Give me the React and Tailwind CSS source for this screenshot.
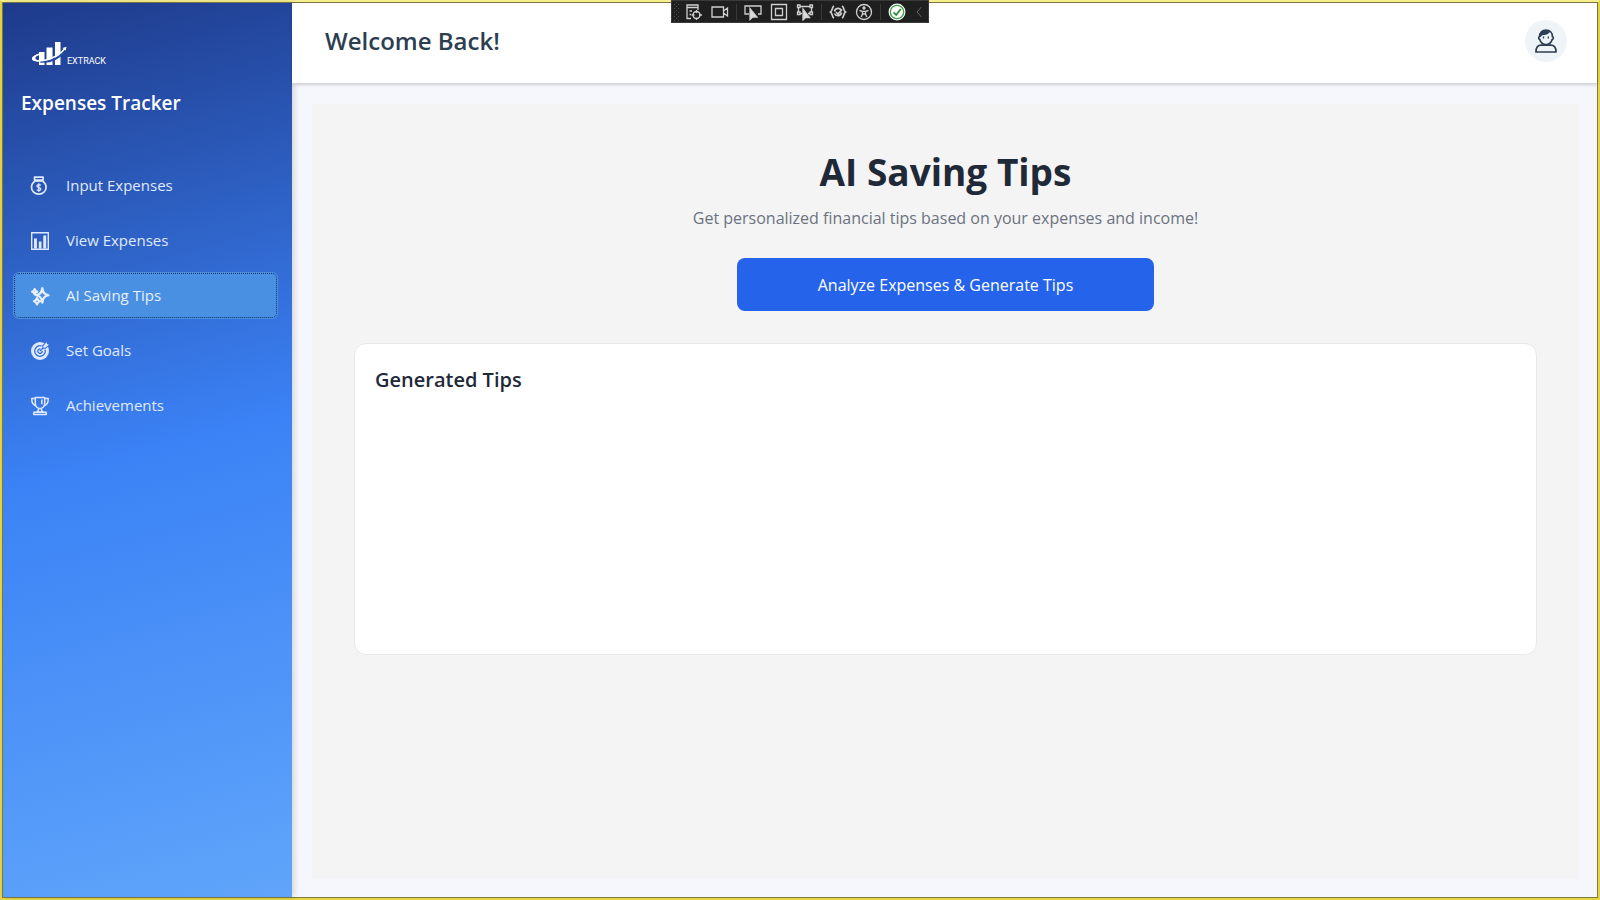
import { useState } from "react";

const iconProps = {
  width: 20,
  height: 20,
  viewBox: "0 0 20 20",
  fill: "none",
  stroke: "currentColor",
  strokeWidth: 1.7,
  strokeLinejoin: "round",
  "aria-hidden": true,
};

const MoneyIcon = () => (
  <svg {...iconProps}>
    <path d="M4.5 1.200h8.600v2.900H4.500zM5 5.200C2.800 6.600 1.500 8.700 1.500 11.200c0 4 3.200 7 7.300 7s7.300-3 7.300-7c0-2.500-1.300-4.600-3.500-6" />
    <path d="M5 5h7.600" />
    <path strokeWidth="1.300" d="M10.800 9.400C10.300 8.800 9.600 8.600 8.800 8.600c-1.100 0-1.900.6-1.900 1.500 0 2 3.900 1 3.900 3 0 .9-.8 1.500-2 1.500-.9 0-1.600-.3-2.100-.9M8.800 7.200v8.800" />
  </svg>
);

const ChartIcon = () => (
  <svg {...iconProps} strokeLinejoin="miter">
    <path d="M1.700 1.700h16.600v16.600H1.700z" strokeWidth="1.400" />
    <path d="M4 7.500h2.900v10H4zM8.800 10.500h2.700v7H8.800zM13.300 4.500h2.900v13h-2.900z" fill="currentColor" stroke="none" />
  </svg>
);

const SparkleIcon = () => (
  <svg {...iconProps}>
    <path d="M12.300 2c.6 4.700 1.800 6.300 6.200 7.300-4.400 1-5.600 2.700-6.200 7.400-.6-4.700-1.800-6.400-6.200-7.400 4.400-1 5.600-2.600 6.200-7.300z" strokeWidth="2.200" />
    <path d="M4.700 3c.4 1.700 1 2.300 2.700 2.700-1.700.4-2.300 1-2.700 2.700C4.300 6.700 3.700 6.100 2 5.700c1.700-.4 2.300-1 2.700-2.700zM7 12c.5 2 1.100 2.700 3.100 3.200-2 .5-2.600 1.200-3.100 3.200-.5-2-1.100-2.700-3.100-3.200 2-.5 2.600-1.200 3.100-3.200z" strokeWidth="2.200" />
  </svg>
);

const GoalIcon = () => (
  <svg {...iconProps} stroke="none">
    <circle cx="10" cy="10" r="9" fill="currentColor" />
    <path stroke="#3570e0" strokeWidth="1.300" d="M11.500 4.900a5.300 5.300 0 1 0 3.600 3.600M10.300 7.900a2.200 2.200 0 1 0 1.900 1.900M10 10l3-3M13 7l-.2-2.300L16 1.500M13 7l2.300.2L18.500 4" />
    <path fill="currentColor" d="M13.600 6.400V4.900L16.400 1l.6 2 2 .7-3.700 2.800z" />
  </svg>
);

const TrophyIcon = () => (
  <svg {...iconProps} strokeWidth="1.500">
    <path d="M5.300 1.500h9.400v5.800c0 3-2 5.200-4.700 5.200S5.300 10.300 5.300 7.300z" />
    <path d="M5.300 2.600H1.700c0 4 1.300 6.500 4.300 7.200M14.700 2.600h3.600c0 4-1.300 6.500-4.300 7.200" />
    <path d="M8.800 12.500c0 1.700-.6 2.600-1.800 3.400h6c-1.200-.8-1.800-1.700-1.800-3.400M3.700 16.200h12.600v2.300H3.700zM11.800 3.500v4.800" />
  </svg>
);

const UserIcon = () => (
  <svg width="22" height="24" viewBox="0 0 22 24" fill="none" stroke="currentColor" strokeWidth="1.700" strokeLinejoin="round" aria-hidden="true">
    <path d="M4.600 7.500C4.600 3.500 7.300 1 11 1s6.400 2.500 6.400 6.500c1.300.4 1.300 2.600-.2 2.900-.9 3-3.300 5.100-6.200 5.100s-5.300-2.100-6.200-5.100C3.300 10.100 3.300 7.900 4.600 7.500z" />
    <path d="M4.500 7.500C4.500 3.500 7.300 1 11 1c2 0 3.500.7 4.500 1.800C14 3.500 13.500 5 11.500 5.600 9 6.500 6.800 5.500 6 8z" fill="currentColor" stroke="none" />
    <path d="M8.500 7.500v2M13.300 7.500v2" strokeWidth="1.300" />
    <path d="M1 23c0-4.500 2.200-6.800 5.200-6.800h9.600c3 0 5.200 2.300 5.200 6.800z" />
  </svg>
);

const LogoMark = () => (
  <svg width="36" height="26" viewBox="0 0 36 26" fill="none" aria-hidden="true">
    <path fill="#fff" d="M8 11h5.500v13H8zM15.500 6.500h6V24h-6zM24 1h5.500v23H24z" />
    <path stroke="#244ba6" strokeWidth="2" d="M9 20.500c9 1 18-2.500 24-9.500" />
    <path stroke="#fff" strokeWidth="1.500" d="M12 12.500C5 13.500 1 16.500 1.800 18.300 3.500 22 24 20 34 7.500" />
    <path fill="#fff" d="M1 17.500C2 15 5.500 13 9 12.500 5 14.500 3.500 16.500 5 18.300c1.500 1 3.500 1.300 5 1.300-5 .8-9.500-.1-9-2.100zM31.500 7L35.500 5.800l-.8 3.700z" />
  </svg>
);

const navItems = [
  { label: "Input Expenses", Icon: MoneyIcon },
  { label: "View Expenses", Icon: ChartIcon },
  { label: "AI Saving Tips", Icon: SparkleIcon },
  { label: "Set Goals", Icon: GoalIcon },
  { label: "Achievements", Icon: TrophyIcon },
];

const toolGroups = [
  [
    {
      label: "Go to Live Visual Tree",
      art: <path d="M2 4.500V2h11v5M2 2h11v2.500H2zM2 4v11.500h4M4.500 8H7M4.500 11.500H6M11.500 8.500a3.500 3.500 0 1 0 0 7 3.500 3.500 0 0 0 0-7zM11.500 7v3M11.500 14.500V17M6.500 12h3M14 12h3" />,
    },
    {
      label: "Show in XAML Live Preview",
      art: <path d="M1 4h11.500v10H1zM12.500 8l4-3v8l-4-3" />,
    },
  ],
  [
    {
      label: "Select Element",
      art: (
        <>
          <path d="M5 11H1V3h16v8h-3" />
          <path d="M6 5.500v11l2.800-2.500h4.200z" fill="#ddd" />
        </>
      ),
    },
    {
      label: "Display Layout Adorners",
      art: <path d="M1.500 1.500h15v15h-15zM5.500 5.500h7v7h-7z" />,
    },
    {
      label: "Track Focused Element",
      art: (
        <>
          <path d="M4 3.500h10M2.500 5v4M15.500 5v4M4 10.500h2M12 10.500h2M1.500 2H4v2.500H1.500zM14 2h2.500v2.500H14zM1.500 9H4v2.500H1.500zM14 9h2.500v2.500H14z" />
          <path d="M7 6v11l2.500-2.500h4z" fill="#ddd" />
        </>
      ),
    },
  ],
  [
    {
      label: "Binding Failures",
      art: <path strokeWidth="1.700" d="M5 3C2.500 4 4 7.500 1.500 9 4 10.500 2.500 14 5 15M13 3c2.500 1 1 4.500 3.500 6-2.500 1.500-1 5-3.500 6M5.500 8.500a3.700 3.700 0 0 1 7-1M12.500 9.500a3.700 3.700 0 0 1-7 1M7 9l2 2 4-4.500" />,
    },
    {
      label: "Scan for Accessibility Issues",
      art: (
        <>
          <circle cx="9" cy="9" r="7.500" />
          <circle cx="9" cy="5" r="1" fill="#ddd" />
          <path d="M4.500 7.500l3 .8h3l3-.8M7.500 8.300v2.500L6.300 14M10.500 8.300v2.500l1.200 3.200M7.500 11h3" />
        </>
      ),
    },
  ],
  [
    {
      label: "Hot Reload",
      art: (
        <>
          <circle cx="9" cy="9" r="7.800" fill="#fff" stroke="#fff" />
          <circle cx="9" cy="9" r="6.700" stroke="#43a047" />
          <path stroke="#2e8b3d" strokeWidth="1.800" d="M5.500 9.300l2.700 2.700 4.500-6" />
        </>
      ),
    },
  ],
];

function DebugToolbar() {
  return (
    <div className="absolute -top-0.5 left-1/2 -translate-x-1/2 z-10 flex items-center h-[23px] bg-[#1f1f1f] border border-[#3a3a3a]">
      <svg width="9" height="20" viewBox="0 0 9 20" fill="#4a4a4a" aria-hidden="true">
        {[2, 6, 10, 14, 18].map((y) => (
          <path key={y} d={`M2 ${y}h1v1h-1zM6 ${y}h1v1h-1zM4 ${y - 2}h1v1h-1z`} />
        ))}
      </svg>
      {toolGroups.map((group, i) => (
        <div key={i} className="flex items-center">
          {i > 0 && <div className="w-px h-4 mx-[3px] bg-[#3a3a3a]" />}
          {group.map(({ label, art }) => (
            <button key={label} aria-label={label} className="w-[26px] flex justify-center">
              <svg width="18" height="18" viewBox="0 0 18 18" fill="none" stroke="#d0d0d0" strokeWidth="1.300">
                {art}
              </svg>
            </button>
          ))}
        </div>
      ))}
      <button aria-label="Collapse toolbar" className="w-[18px] flex justify-center">
        <svg width="8" height="12" viewBox="0 0 8 12" fill="none" stroke="#6a6a6a">
          <path d="M6.500 1L2 6l4.500 5" />
        </svg>
      </button>
    </div>
  );
}

function Sidebar({ active, onSelect }) {
  return (
    <aside className="w-[289px] shrink-0 pt-9 bg-[linear-gradient(165deg,#1e3a8a_0%,#3b82f6_50%,#60a5fa_100%)] shadow-[2px_0_6px_rgba(0,0,0,0.15)]">
      <div className="flex items-end pl-7 pt-0.5 text-white">
        <LogoMark />
        <span className="font-['Roboto',sans-serif] text-[9px] leading-3">EXTRACK</span>
      </div>
      <h2 className="mt-5 pl-[18px] text-[19px] leading-8 font-semibold text-white">Expenses Tracker</h2>
      <nav className="mt-[43px] pl-2.5 pr-3.5 flex flex-col gap-2">
        {navItems.map(({ label, Icon }) => (
          <a
            key={label}
            href="#"
            onClick={() => onSelect(label)}
            className={
              active === label
                ? "flex items-center gap-4 h-[47px] px-[17px] rounded-md bg-[#4a90e2] text-[15px] text-[#e8effc] outline-1 outline-dotted outline-[#12305e] -outline-offset-2"
                : "flex items-center gap-4 h-[47px] px-[17px] rounded-md text-[15px] text-[#e0e9fb] hover:bg-white/10"
            }
          >
            <Icon />
            {label}
          </a>
        ))}
      </nav>
    </aside>
  );
}

export default function App() {
  const [active, setActive] = useState("AI Saving Tips");

  return (
    <div className="relative min-h-screen flex flex-col border-2 border-[#e5d544] border-t-[#f7ee8c] font-['Open_Sans',sans-serif]">
      <DebugToolbar />
      <div className="flex-1 flex border border-[#7d7a4c] bg-[#f5f7fc]">
        <Sidebar active={active} onSelect={setActive} />

        <div className="flex-1 flex flex-col min-w-0">
          <header className="flex items-center justify-between h-[81px] pl-[33px] pr-[30px] pb-1 bg-white border-b border-[#d3d4d8] shadow-[0_1px_3px_rgba(0,0,0,0.15)]">
            <h1 className="text-2xl font-semibold text-[#2c3e50]">Welcome Back!</h1>
            <button aria-label="Profile" className="size-[42px] rounded-full bg-[#eff4f9] text-[#2c3e50] flex items-center justify-center">
              <UserIcon />
            </button>
          </header>

          <main className="flex-1 mt-5 ml-5 mr-[18px] mb-[18px] px-[42px] pt-[38px] bg-[#f4f4f4] flex flex-col items-center">
            <h2 className="text-[37px] leading-[60px] font-bold text-[#1f2937]">AI Saving Tips</h2>
            <p className="mt-1 text-base leading-6 text-[#6b7280]">
              Get personalized financial tips based on your expenses and income!
            </p>
            <button className="mt-7 w-[417px] h-[53px] rounded-lg bg-[#2563eb] hover:bg-blue-700 text-white text-base font-medium">
              Analyze Expenses &amp; Generate Tips
            </button>

            <section className="mt-8 w-full min-h-[312px] px-5 py-5 bg-white border border-[#e8e8e8] rounded-xl">
              <h3 className="text-xl leading-8 font-semibold text-[#1f2937]">Generated Tips</h3>
            </section>
          </main>
        </div>
      </div>
    </div>
  );
}
